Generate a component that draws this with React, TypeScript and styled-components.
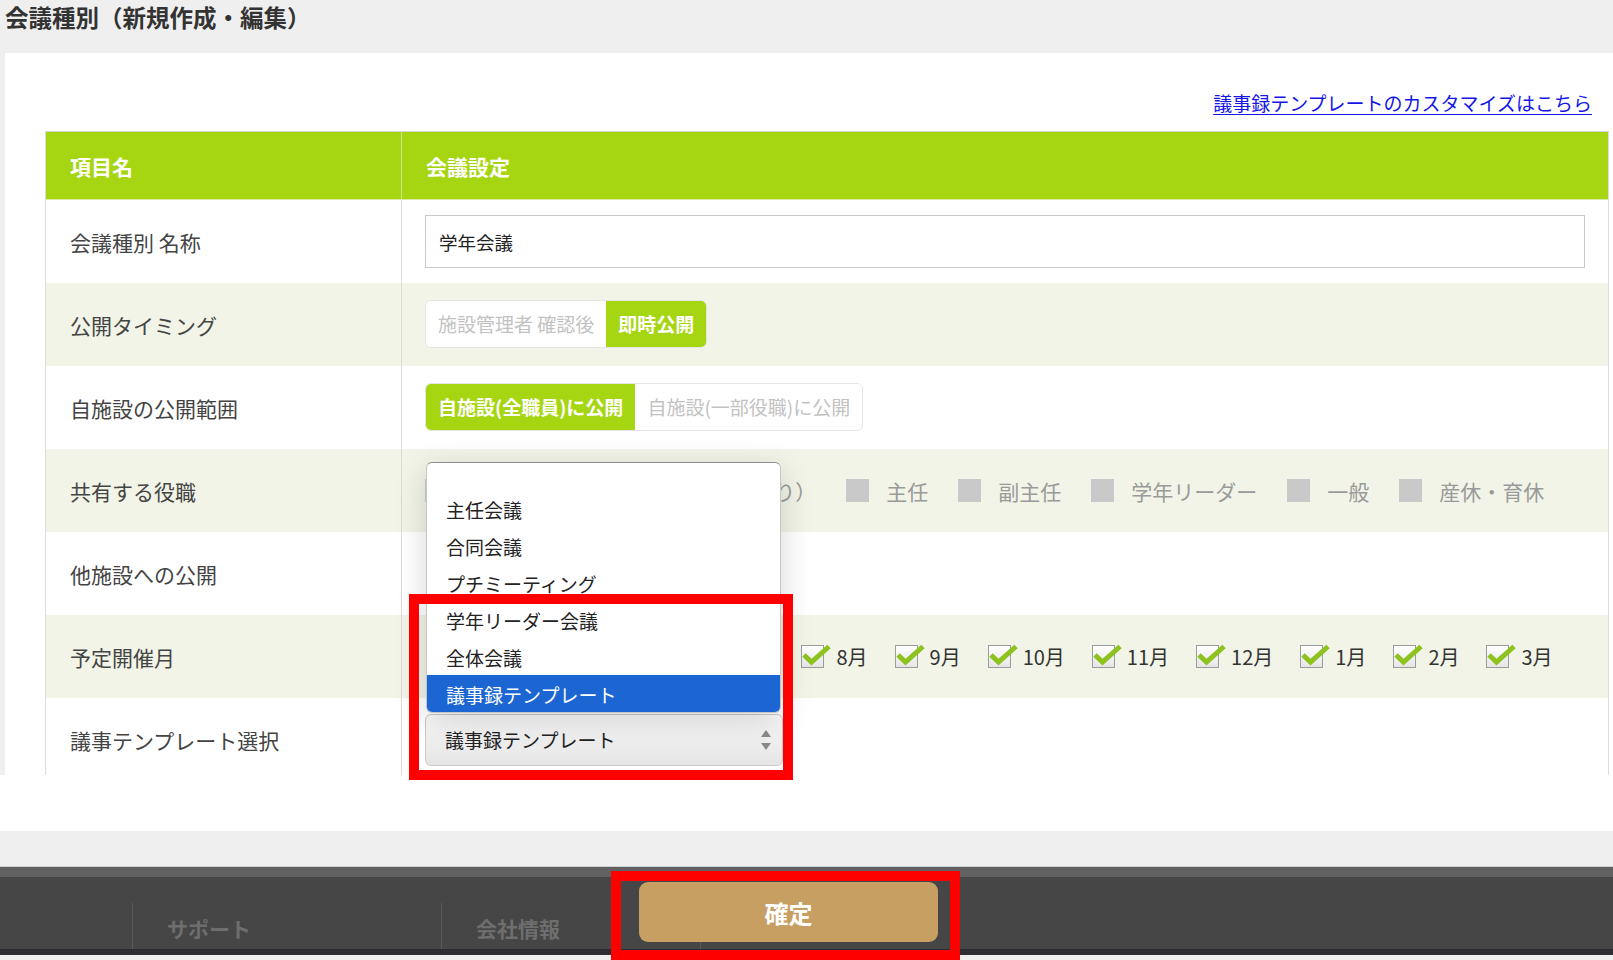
import React from 'react';
import styled, {createGlobalStyle, css} from 'styled-components';

const green = '#a6d612';
const stripe = '#f1f4e7';
const line = '#dcdcdc';

const GlobalStyle = createGlobalStyle`
  body {
    margin: 0;
    background: #efefef;
    font-family: 'Noto Sans CJK JP', 'Noto Sans', sans-serif;
    color: #333;
  }
  * {
    box-sizing: border-box;
  }
`;

const Page = styled.div`
  position: relative;
  width: 1613px;
  height: 960px;
  overflow: hidden;
`;

const Title = styled.h1`
  margin: 0;
  height: 53px;
  padding-left: 5px;
  font-size: 23.5px;
  font-weight: 700;
  line-height: 34px;
  color: #333;
`;

const Panel = styled.div`
  margin-left: 5px;
  height: 722px;
  padding: 0 4px 0 40px;
  background: #fff;
  overflow: hidden;
`;

const LinkRow = styled.div`
  height: 78px;
  display: flex;
  justify-content: flex-end;
  align-items: flex-end;
  padding: 0 17px 14px 0;
`;

const Link = styled.a`
  font-size: 19px;
  line-height: 28px;
  color: #1515e8;
  text-decoration: underline;
  text-underline-offset: 3px;
`;

const Table = styled.div`
  border-top: 1px solid #d6d6d6;
  border-left: 1px solid ${line};
  border-right: 1px solid ${line};
`;

const Row = styled.div<{$striped?: boolean}>`
  display: grid;
  grid-template-columns: 355px 1fr;
  height: 83px;
  background: ${(p) => (p.$striped ? stripe : '#fff')};
`;

const HeadRow = styled(Row)`
  height: 68px;
  background: ${green};
  border-bottom: 1px solid #d9eaa8;
`;

const cellBase = css`
  display: flex;
  align-items: center;
`;

const HeadCell = styled.div`
  ${cellBase};
  padding-left: 24px;
  font-size: 21px;
  font-weight: 700;
  color: #fff;
`;

const HeadValueCell = styled(HeadCell)`
  border-left: 1px solid #cfe48a;
`;

const LabelCell = styled.div`
  ${cellBase};
  padding-left: 24px;
  font-size: 21px;
  color: #444;
`;

const ValueCell = styled.div`
  ${cellBase};
  padding: 0 23px;
  border-left: 1px solid ${line};
`;

const TextInput = styled.input`
  width: 100%;
  height: 53px;
  padding: 0 13px;
  border: 1px solid #c8c8c8;
  font-family: inherit;
  font-size: 18.5px;
  color: #222;
  background: #fff;
  outline: none;
`;

const ToggleGroup = styled.div`
  display: inline-flex;
  height: 48px;
  margin-top: -2px;
  border: 1px solid #e4e4e4;
  border-radius: 6px;
  overflow: hidden;
  background: #fff;
`;

const ToggleOption = styled.span<{$active?: boolean}>`
  display: flex;
  align-items: center;
  padding: 0 12px;
  font-size: 19px;
  font-weight: ${(p) => (p.$active ? 700 : 400)};
  color: ${(p) => (p.$active ? '#fff' : '#c2c2c2')};
  background: ${(p) => (p.$active ? green : '#fff')};
`;

const ChoiceList = styled.div`
  display: flex;
  align-items: center;
  white-space: nowrap;
`;

const RoleItem = styled.div`
  display: flex;
  align-items: center;
  margin-right: 30px;

  &:first-child {
    margin-right: 24px;
  }
`;

const RoleBox = styled.span`
  width: 23px;
  height: 23px;
  margin-right: 17px;
  background: #c9c9c9;
`;

const RoleText = styled.span`
  font-size: 21px;
  color: #9a9a9a;
`;

const MonthItem = styled.div`
  display: flex;
  align-items: center;
  margin-right: 23px;
`;

const MonthBox = styled.span`
  position: relative;
  width: 23px;
  height: 23px;
  margin: 0 12px 0 4px;
  border: 1px solid #9c9c9c;
  background: linear-gradient(#ffffff, #e6e6e6);
`;

const Tick = styled.svg`
  position: absolute;
  left: -1px;
  top: -2px;
  overflow: visible;
`;

const MonthText = styled.span`
  font-size: 20px;
  color: #333;
`;

const SelectWrap = styled.div`
  position: relative;
  width: 358px;
`;

const SelectBox = styled.div`
  display: flex;
  align-items: center;
  justify-content: space-between;
  height: 52px;
  padding: 0 10px 0 19px;
  border: 1px solid #cacaca;
  border-radius: 6px;
  background: linear-gradient(#fbfbfb, #e5e5e5);
  font-size: 19px;
  color: #222;
`;

const Popup = styled.ul`
  position: absolute;
  left: 1px;
  bottom: calc(100% + 1px);
  width: 355px;
  margin: 0;
  padding: 27px 0 0;
  list-style: none;
  background: #fff;
  border: 1px solid #c6c6c6;
  border-top-color: #8e8e8e;
  border-radius: 6px;
  overflow: hidden;
  box-shadow: 0 8px 32px rgba(0, 0, 0, 0.16);
`;

const PopupItem = styled.li<{$selected?: boolean}>`
  height: 37px;
  padding-left: 19px;
  font-size: 19px;
  line-height: 39px;
  color: ${(p) => (p.$selected ? '#fff' : '#222')};
  background: ${(p) => (p.$selected ? '#1b66d2' : 'transparent')};
`;

const BelowPanel = styled.div`
  height: 56px;
  background: #fff;
`;

const GreyGap = styled.div`
  height: 35px;
  background: #efefef;
`;

const Footer = styled.footer`
  position: relative;
  border-top: 1px solid #cfcfcf;
  background: #fff;
`;

const FooterStripe = styled.div`
  height: 10px;
  background: #616161;
`;

const FooterNav = styled.nav`
  display: flex;
  height: 72px;
  padding: 26px 0 0 132px;
  background: #464646;
`;

const FooterItem = styled.div<{$w: number}>`
  display: flex;
  align-items: center;
  width: ${(p) => p.$w}px;
  padding: 4px 0 0 34px;
  border-left: 1px solid #5a5a5a;
  font-size: 21px;
  font-weight: 700;
  color: #6e6e6e;
`;

const FooterBase = styled.div`
  height: 6px;
  background: #2c2e31;
`;

const ConfirmButton = styled.button`
  position: absolute;
  left: 639px;
  top: 15px;
  width: 299px;
  height: 60px;
  border: none;
  border-radius: 9px;
  background: #c89f62;
  font-family: inherit;
  font-size: 24px;
  font-weight: 700;
  color: #fff;
`;

const Callout = styled.div<{$x: number; $y: number; $w: number; $h: number}>`
  position: absolute;
  left: ${(p) => p.$x}px;
  top: ${(p) => p.$y}px;
  width: ${(p) => p.$w}px;
  height: ${(p) => p.$h}px;
  border: 10px solid #ff0000;
  pointer-events: none;
`;

const roles = ['管理者(本部)', '教頭（役職あり）', '主任', '副主任', '学年リーダー', '一般', '産休・育休'];
const months = ['4月', '5月', '6月', '7月', '8月', '9月', '10月', '11月', '12月', '1月', '2月', '3月'];
const templates = ['主任会議', '合同会議', 'プチミーティング', '学年リーダー会議', '全体会議', '議事録テンプレート'];

const Check = () => (
  <Tick width="30" height="22" viewBox="0 0 30 22">
    <polyline points="3,11 10.5,18 28,2.5" fill="none" stroke="#8dc21f" strokeWidth="5" />
  </Tick>
);

const Arrows = () => (
  <svg width="12" height="24" viewBox="0 0 12 24">
    <path d="M6 2 L11 9 H1 Z" fill="#8a8a8a" />
    <path d="M6 22 L11 15 H1 Z" fill="#8a8a8a" />
  </svg>
);

export default function App() {
  return (
    <Page>
      <GlobalStyle />
      <Title>会議種別（新規作成・編集）</Title>
      <Panel>
        <LinkRow>
          <Link href="#">議事録テンプレートのカスタマイズはこちら</Link>
        </LinkRow>
        <Table>
          <HeadRow>
            <HeadCell>項目名</HeadCell>
            <HeadValueCell>会議設定</HeadValueCell>
          </HeadRow>
          <Row>
            <LabelCell>会議種別 名称</LabelCell>
            <ValueCell>
              <TextInput value="学年会議" readOnly />
            </ValueCell>
          </Row>
          <Row $striped>
            <LabelCell>公開タイミング</LabelCell>
            <ValueCell>
              <ToggleGroup>
                <ToggleOption>施設管理者 確認後</ToggleOption>
                <ToggleOption $active>即時公開</ToggleOption>
              </ToggleGroup>
            </ValueCell>
          </Row>
          <Row>
            <LabelCell>自施設の公開範囲</LabelCell>
            <ValueCell>
              <ToggleGroup>
                <ToggleOption $active>自施設(全職員)に公開</ToggleOption>
                <ToggleOption>自施設(一部役職)に公開</ToggleOption>
              </ToggleGroup>
            </ValueCell>
          </Row>
          <Row $striped>
            <LabelCell>共有する役職</LabelCell>
            <ValueCell>
              <ChoiceList>
                {roles.map((r) => (
                  <RoleItem key={r}>
                    <RoleBox />
                    <RoleText>{r}</RoleText>
                  </RoleItem>
                ))}
              </ChoiceList>
            </ValueCell>
          </Row>
          <Row>
            <LabelCell>他施設への公開</LabelCell>
            <ValueCell />
          </Row>
          <Row $striped>
            <LabelCell>予定開催月</LabelCell>
            <ValueCell>
              <ChoiceList>
                {months.map((m) => (
                  <MonthItem key={m}>
                    <MonthBox>
                      <Check />
                    </MonthBox>
                    <MonthText>{m}</MonthText>
                  </MonthItem>
                ))}
              </ChoiceList>
            </ValueCell>
          </Row>
          <Row>
            <LabelCell>議事テンプレート選択</LabelCell>
            <ValueCell>
              <SelectWrap>
                <Popup>
                  {templates.map((t) => (
                    <PopupItem key={t} $selected={t === '議事録テンプレート'}>
                      {t}
                    </PopupItem>
                  ))}
                </Popup>
                <SelectBox>
                  議事録テンプレート
                  <Arrows />
                </SelectBox>
              </SelectWrap>
            </ValueCell>
          </Row>
        </Table>
      </Panel>
      <BelowPanel />
      <GreyGap />
      <Footer>
        <FooterStripe />
        <FooterNav>
          <FooterItem $w={309}>サポート</FooterItem>
          <FooterItem $w={259}>会社情報</FooterItem>
          <FooterItem $w={200} />
        </FooterNav>
        <FooterBase />
        <ConfirmButton>確定</ConfirmButton>
      </Footer>
      <Callout $x={409} $y={594} $w={384} $h={186} />
      <Callout $x={611} $y={871} $w={349} $h={89} />
    </Page>
  );
}
